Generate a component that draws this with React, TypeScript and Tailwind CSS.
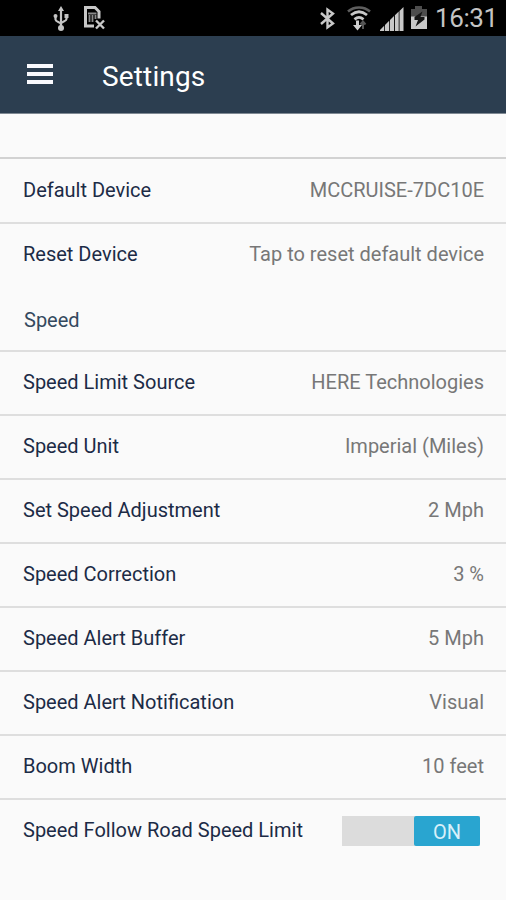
import { clsx } from 'clsx';

type Item = { label: string; value: string };

const deviceItems: Item[] = [
  { label: 'Default Device', value: 'MCCRUISE-7DC10E' },
  { label: 'Reset Device', value: 'Tap to reset default device' },
];

const speedItems: Item[] = [
  { label: 'Speed Limit Source', value: 'HERE Technologies' },
  { label: 'Speed Unit', value: 'Imperial (Miles)' },
  { label: 'Set Speed Adjustment', value: '2 Mph' },
  { label: 'Speed Correction', value: '3 %' },
  { label: 'Speed Alert Buffer', value: '5 Mph' },
  { label: 'Speed Alert Notification', value: 'Visual' },
  { label: 'Boom Width', value: '10 feet' },
];

function UsbIcon() {
  return (
    <svg width="16" height="26" viewBox="0 0 16 26" fill="none" stroke="#c4c4c4" strokeWidth="2.2">
      <path d="M8 4v18M2.5 10v3.500c0 2.500 5.500 2.500 5.500 5M13.500 10v3c0 2.500-5.500 2.500-5.500 5" />
      <path d="M8 0l3 5H5z" fill="#c4c4c4" stroke="none" />
      <circle cx="8" cy="22" r="3" fill="#c4c4c4" stroke="none" />
      <circle cx="2.500" cy="10" r="2" fill="#c4c4c4" stroke="none" />
      <path d="M11.500 8h4v4h-4z" fill="#c4c4c4" stroke="none" />
    </svg>
  );
}

function NoSimIcon() {
  return (
    <svg width="23" height="24" viewBox="0 0 23 24" fill="none" stroke="#c8c8c8">
      <path d="M11 20H2.500V1.500h9.500L16 5.500v7" strokeWidth="3" />
      <path d="M5 7.500h8.500M6.500 9v7M9.500 9v7M12.500 9v4" stroke="#8a8a8a" strokeWidth="1.800" />
      <path d="M13 14.500l8 8M21 14.500l-8 8" strokeWidth="2.400" />
    </svg>
  );
}

function BluetoothIcon() {
  return (
    <svg width="15" height="23" viewBox="0 0 15 23" fill="none" stroke="#c8c8c8" strokeWidth="2.400">
      <path d="M1 6l12 10.500L7.500 20.500V2.500L13 6.500 1 17" />
    </svg>
  );
}

function WifiIcon() {
  return (
    <svg width="24" height="25" viewBox="0 0 24 25" fill="none">
      <path d="M1 5.500C7 0 17 0 23 5.500" stroke="#5e5e5e" strokeWidth="2.500" />
      <path d="M4 9c5-4 11-4 16 0" stroke="#c8c8c8" strokeWidth="2.800" />
      <path d="M7.500 13.300c3-2.500 6-2.500 9 0" stroke="#c8c8c8" strokeWidth="2.800" />
      <path d="M9 14.500h3V19h3l-4.500 5.500L6 19h3z" fill="#d0d0d0" />
      <path d="M16 23v-7M13.500 18.500l2.500-3 2.500 3" stroke="#555" strokeWidth="2" />
    </svg>
  );
}

function SignalIcon() {
  return (
    <svg width="24" height="24" viewBox="0 0 24 24" fill="#c8c8c8">
      <path d="M0 24v-1l4.200-4.200V24zM5 24v-6l4.200-4.200V24zM10 24V13l4-4v15zM14.900 24V8.300l3.800-3.800V24zM19.500 24V4L23.500 0v24z" />
    </svg>
  );
}

function BatteryIcon() {
  return (
    <svg width="18" height="23" viewBox="0 0 18 23">
      <path d="M5 0h7v3h5v9H1V3h4z" fill="#4d4d4d" />
      <path d="M1 10.500h16V23H1z" fill="#c8c8c8" />
      <path d="M12.500 5.500L4.500 11v3h3.500L5.500 20.500l9-7V11h-4z" fill="#151515" />
    </svg>
  );
}

function StatusBar() {
  return (
    <div className="flex h-9 items-start bg-black pl-[53px] pt-1.5">
      <UsbIcon />
      <div className="ml-[14px]"><NoSimIcon /></div>
      <div className="ml-[214px] pt-px"><BluetoothIcon /></div>
      <div className="ml-3"><WifiIcon /></div>
      <div className="ml-[9px] pt-px"><SignalIcon /></div>
      <div className="ml-1.5"><BatteryIcon /></div>
      <span className="ml-[7px] text-[26px] leading-6 tracking-[-0.4px] text-[#c4c4c4]">16:31</span>
    </div>
  );
}

function Header() {
  return (
    <header className="flex h-[78px] items-center border-b border-[#7f8993] bg-[#2c3e50] pl-[27px]">
      <div className="mb-px flex flex-col gap-1">
        <span className="h-1 w-[26px] bg-[#fafafe]" />
        <span className="h-1 w-[26px] bg-[#fafafe]" />
        <span className="h-1 w-[26px] bg-[#fafafe]" />
      </div>
      <h1 className="ml-[49px] mt-[5px] text-[28px] leading-8 tracking-[0.15px] text-white">Settings</h1>
    </header>
  );
}

function Row({ label, value, last = false }: Item & { last?: boolean }) {
  return (
    <div
      className={clsx(
        'flex h-16 items-center justify-between pl-[23px] pr-[22px]',
        last ? 'pb-1' : 'border-b-2 border-[#dedede] pb-0.5',
      )}
    >
      <span className="text-[#1c2b46]">{label}</span>
      <span className="text-[#777]">{value}</span>
    </div>
  );
}

export default function App() {
  return (
    <main className="h-[900px] w-[506px] overflow-hidden bg-[#fafafa] font-['Roboto',sans-serif] text-xl">
      <StatusBar />
      <Header />
      <div className="h-[45px] border-b-2 border-[#d2d2d2]" />
      <div className="h-[127px] pt-px">
        {deviceItems.map((item, i) => (
          <Row key={item.label} {...item} last={i === deviceItems.length - 1} />
        ))}
      </div>
      <h2 className="flex h-[66px] items-center border-b-2 border-[#dedede] pl-6 pt-[3px] text-[#34495e]">Speed</h2>
      {speedItems.map((item) => (
        <Row key={item.label} {...item} />
      ))}
      <div className="flex h-[62px] items-center justify-between pl-[23px] pr-[26px]">
        <span className="pb-0.5 text-[#1c2b46]">Speed Follow Road Speed Limit</span>
        <div className="flex h-[30px] w-[138px] bg-[#dcdcdc]">
          <span className="ml-auto flex w-[66px] items-center justify-center rounded-xs bg-[#29a5d0] pt-0.5 text-[#d8f0fa]">ON</span>
        </div>
      </div>
    </main>
  );
}
